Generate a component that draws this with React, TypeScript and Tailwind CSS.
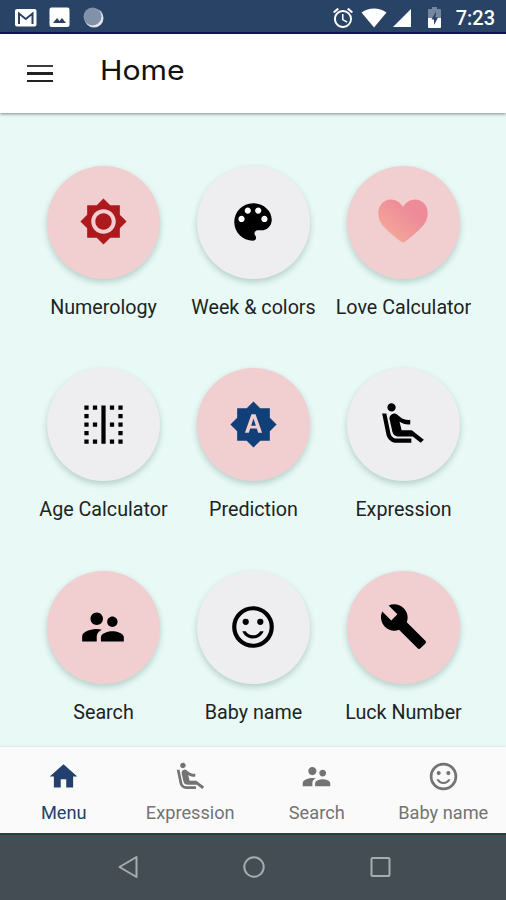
import React from 'react';
import {
  MdAccessAlarm,
  MdBorderVertical,
  MdBrightnessAuto,
  MdBrightnessHigh,
  MdBuild,
  MdHome,
} from 'react-icons/md';

interface IconProps {
  size: number;
}

interface Tile {
  label: string;
  icon: React.ReactNode;
  pink: boolean;
}

interface Tab {
  label: string;
  Icon: React.ComponentType<IconProps>;
}

const Heart = () => (
  <svg className="mb-[2px]" width="50" height="44" viewBox="0 0 50 44">
    <defs>
      <linearGradient id="heart" x1="0.15" y1="0.85" x2="0.7" y2="0.3">
        <stop offset="0" stopColor="#f4a898" />
        <stop offset="1" stopColor="#ee8b99" />
      </linearGradient>
    </defs>
    <path
      fill="url(#heart)"
      d="M25 43.500C22.500 42.600 18.500 39.500 14 35.500C6.500 29 .3 23.500 .3 14C.3 6 6 .4 13 .4C18 .4 22.500 3.500 25 8C27.500 3.500 32 .4 37 .4C44 .4 49.700 6 49.700 14C49.700 23.500 43.500 29 36 35.500C31.500 39.500 27.500 42.600 25 43.500Z"
    />
  </svg>
);

const PaletteIcon = ({ size }: IconProps) => (
  <svg width={size} height={size} viewBox="0 0 24 24">
    <g fill="#fff">
      <circle cx="6.500" cy="10.500" r="1.600" />
      <circle cx="9.500" cy="6.500" r="1.600" />
      <circle cx="14.500" cy="6.500" r="1.600" />
      <circle cx="17.500" cy="10.500" r="1.600" />
    </g>
    <path
      fill="currentColor"
      d="M12 3c-4.970 0-9 4.030-9 9s4.030 9 9 9c.83 0 1.500-.67 1.500-1.500 0-.39-.15-.74-.39-1.010-.23-.26-.38-.61-.38-.99 0-.83.67-1.500 1.500-1.500H16c2.760 0 5-2.240 5-5 0-4.420-4.030-8-9-8zm-5.500 9c-.83 0-1.500-.67-1.500-1.500S5.670 9 6.500 9 8 9.670 8 10.500 7.330 12 6.500 12zm3-4C8.670 8 8 7.330 8 6.500S8.670 5 9.500 5s1.500.67 1.500 1.500S10.330 8 9.500 8zm5 0c-.83 0-1.500-.67-1.500-1.500S13.670 5 14.500 5s1.500.67 1.500 1.500S15.330 8 14.500 8zm3 4c-.83 0-1.500-.67-1.500-1.500S16.670 9 17.500 9s1.500.67 1.500 1.500-.67 1.500-1.500 1.500z"
    />
  </svg>
);

const SeatIcon = ({ size }: IconProps) => (
  <svg width={size} height={size} viewBox="0 0 24 24" fill="currentColor">
    <path d="M5.350 5.640c-.9-.64-1.120-1.880-.49-2.790.63-.9 1.880-1.120 2.790-.49.9.64 1.120 1.880.49 2.790-.64.9-1.880 1.120-2.790.49zM16 19H8.930c-1.480 0-2.740-1.080-2.960-2.540L4 7H2l1.990 9.760C4.370 19.200 6.470 21 8.940 21H16v-2zm.23-4h-4.880l-1.030-4.100c1.580.89 3.280 1.540 5.150 1.220V9.990c-1.630.31-3.440-.27-4.690-1.250L9.140 7.470c-.23-.18-.49-.3-.76-.38-.32-.09-.66-.12-.99-.06h-.02c-1.230.22-2.050 1.390-1.840 2.610l1.350 5.920C7.160 17 8.390 18 9.830 18h6.850l3.820 3 1.500-1.500-5.770-4.500z" />
  </svg>
);

const PeopleIcon = ({ size }: IconProps) => (
  <svg width={size} height={size} viewBox="0 0 24 24" fill="currentColor">
    <path d="M16.500 12c1.380 0 2.490-1.120 2.490-2.500S17.880 7 16.500 7C15.120 7 14 8.120 14 9.500s1.120 2.500 2.500 2.500zM9 11c1.660 0 2.990-1.340 2.990-3S10.660 5 9 5C7.340 5 6 6.340 6 8s1.340 3 3 3zm7.500 3c-1.830 0-5.500.92-5.500 2.750V19h11v-2.250c0-1.830-3.670-2.750-5.500-2.750zM9 13c-2.330 0-7 1.170-7 3.500V19h7v-2.250c0-.85.33-2.340 2.370-3.470C10.500 13.100 9.660 13 9 13z" />
  </svg>
);

const SmileIcon = ({ size }: IconProps) => (
  <svg width={size} height={size} viewBox="0 0 24 24" fill="currentColor">
    <circle cx="12" cy="12" r="9" fill="none" stroke="currentColor" strokeWidth="2" />
    <circle cx="15.500" cy="9.500" r="1.500" />
    <circle cx="8.500" cy="9.500" r="1.500" />
    <path d="M12 16c-1.480 0-2.750-.81-3.450-2H6.880c.8 2.050 2.790 3.500 5.120 3.500s4.320-1.450 5.120-3.500h-1.670c-.7 1.190-1.970 2-3.450 2z" />
  </svg>
);

const tiles: Tile[] = [
  { label: 'Numerology', icon: <MdBrightnessHigh size={49} className="text-[#ad1a1e]" />, pink: true },
  { label: 'Week & colors', icon: <PaletteIcon size={50} />, pink: false },
  { label: 'Love Calculator', icon: <Heart />, pink: true },
  { label: 'Age Calculator', icon: <MdBorderVertical size={51} />, pink: false },
  { label: 'Prediction', icon: <MdBrightnessAuto size={49} className="text-[#114078]" />, pink: true },
  { label: 'Expression', icon: <SeatIcon size={50} />, pink: false },
  { label: 'Search', icon: <PeopleIcon size={50} />, pink: true },
  { label: 'Baby name', icon: <SmileIcon size={50} />, pink: false },
  { label: 'Luck Number', icon: <MdBuild size={49} />, pink: true },
];

const tabs: Tab[] = [
  { label: 'Menu', Icon: MdHome },
  { label: 'Expression', Icon: SeatIcon },
  { label: 'Search', Icon: PeopleIcon },
  { label: 'Baby name', Icon: SmileIcon },
];

const StatusBar = () => (
  <div className="flex h-[34px] shrink-0 items-center border-b-2 border-[#12125c] bg-[#294366] pl-[15px] pr-[11px] pt-[3px] text-white">
    <svg width="22" height="18" viewBox="0 0 22 18">
      <rect width="21.500" height="17.500" rx="2" fill="#fff" />
      <path d="M4 15V4.500L10.750 10L17.500 4.500V15" fill="none" stroke="#294366" strokeWidth="2" />
    </svg>
    <svg className="ml-3" width="21" height="21" viewBox="0 0 21 21">
      <rect x=".5" y=".5" width="20" height="19.500" rx="2" fill="#fff" />
      <path d="M4 16L8 11L10.500 14L13 11L17 16Z" fill="#294366" />
    </svg>
    <svg className="ml-[13px]" width="21" height="21" viewBox="0 0 21 21">
      <circle cx="11" cy="11" r="9.500" fill="#e0e5ea" />
      <circle cx="9.500" cy="9.500" r="9" fill="#8192a8" />
    </svg>
    <div className="grow" />
    <MdAccessAlarm size={24} />
    <svg className="ml-[6px]" width="26" height="20" viewBox="0 0 26 20">
      <path d="M.5 4.500C8 -1 18 -1 25.500 4.500L13 19.500Z" fill="#fff" />
    </svg>
    <svg className="ml-[6px]" width="18" height="18" viewBox="0 0 18 18">
      <path d="M18 0V18H0Z" fill="#fff" />
    </svg>
    <svg className="ml-[17px]" width="13" height="21" viewBox="0 0 13 21">
      <path d="M0 3Q0 2 1 2H4V0H9V2H12Q13 2 13 3V11H0Z" fill="#7587a0" />
      <path d="M0 11H13V20Q13 21 12 21H1Q0 21 0 20Z" fill="#fff" />
      <path d="M8 4.500L3.500 12.500H6V18L10 10.500H7.500Z" fill="#294366" />
    </svg>
    <span className="ml-[15px] text-[20px] font-medium leading-5">7:23</span>
  </div>
);

const NavigationBar = () => (
  <div className="flex h-[67px] shrink-0 items-center justify-center gap-[104px] border-t-2 border-[#203f3d] bg-[#444d53] pb-[2px] pl-[1px]">
    <svg width="22" height="24" viewBox="0 0 22 24">
      <path d="M19.500 2V22L2.500 12Z" fill="none" stroke="#a6adb0" strokeWidth="2" strokeLinejoin="round" />
    </svg>
    <svg width="22" height="22" viewBox="0 0 22 22">
      <circle cx="11" cy="11" r="9.700" fill="none" stroke="#a6adb0" strokeWidth="2" />
    </svg>
    <svg width="22" height="22" viewBox="0 0 22 22">
      <rect x="2.500" y="2" width="18" height="18" rx="1" fill="none" stroke="#a6adb0" strokeWidth="2" />
    </svg>
  </div>
);

export default function App() {
  return (
    <div className="flex h-[900px] w-[506px] flex-col overflow-hidden bg-[#e8f9f6] font-['Roboto','Liberation_Sans',sans-serif]">
      <StatusBar />

      {/* App bar */}
      <header className="flex h-[79px] shrink-0 items-center bg-white pl-[27px] shadow-[0_1px_3px_rgba(0,0,0,0.45)]">
        <div className="flex w-[26px] flex-col gap-[5px]">
          <div className="h-[2.500px] bg-[#3a3a3a]" />
          <div className="h-[2.500px] bg-[#222]" />
          <div className="h-[2.500px] bg-[#222]" />
        </div>
        <h1 className="ml-[47px] origin-left scale-x-[1.1] pb-[5px] font-[Inter] text-[27.500px] text-[#111]">Home</h1>
      </header>

      {/* Tiles */}
      <main className="grid min-h-0 grow grid-cols-[150px_150px_150px] content-start gap-y-[14.500px] pl-[28.500px] pt-[52.500px]">
        {tiles.map(tile => (
          <div key={tile.label} className="flex h-[188px] flex-col items-center">
            <div
              className={`flex size-[113px] items-center justify-center rounded-full pb-[1px] pr-[1px] text-black shadow-[0_3px_6px_rgba(0,60,40,0.22)] ${
                tile.pink ? 'bg-[#f1cfd1]' : 'bg-[#eeedf0]'
              }`}
            >
              {tile.icon}
            </div>
            <span className="mt-[17px] whitespace-nowrap text-[19.700px] leading-6 text-[#1c2423]">{tile.label}</span>
          </div>
        ))}
      </main>

      {/* Bottom tabs */}
      <nav className="grid h-[86px] shrink-0 grid-cols-4 bg-[#fafafa] shadow-[0_-1px_2px_rgba(0,0,0,0.08)]">
        {tabs.map(({ label, Icon }, i) => (
          <div
            key={label}
            className={`flex flex-col items-center pl-[1px] pt-[13px] ${i === 0 ? 'text-[#23406e]' : 'text-[#737373]'}`}
          >
            <Icon size={33} />
            <span className="mt-[8px] whitespace-nowrap text-[18.200px] leading-6">{label}</span>
          </div>
        ))}
      </nav>

      <NavigationBar />
    </div>
  );
}
